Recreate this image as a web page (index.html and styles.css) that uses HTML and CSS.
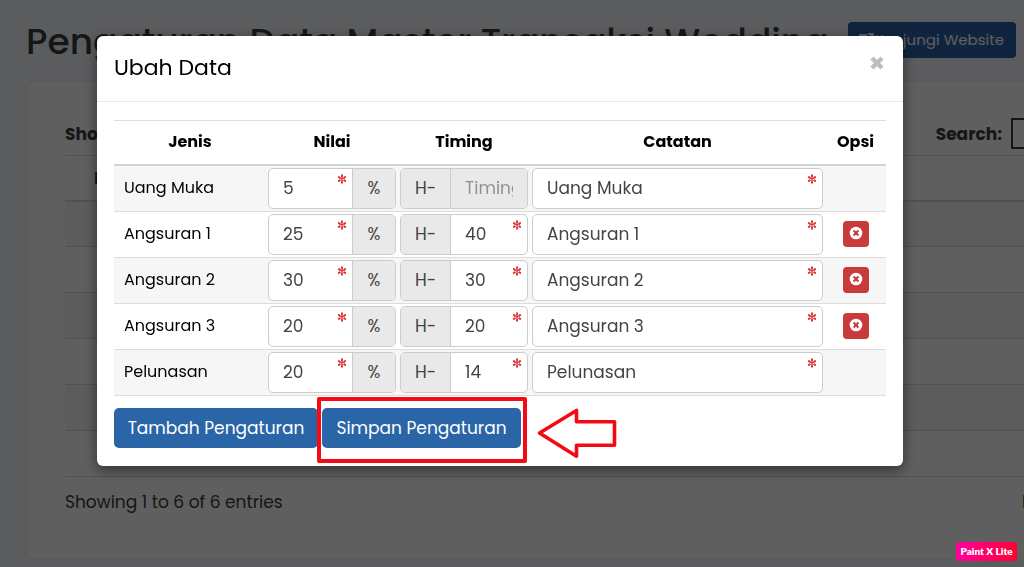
FILE: index.html
```html
<!DOCTYPE html>
<html lang="id">
<head>
<meta charset="utf-8">
<meta name="viewport" content="width=device-width, initial-scale=1">
<title>Pengaturan Data Master Transaksi Wedding</title>
<link rel="stylesheet" href="styles.css">
</head>
<body>
<svg class="defs" aria-hidden="true">
  <symbol id="star" viewBox="0 0 10 10"><g fill="none" stroke="#d9363a" stroke-linecap="round"><path stroke-width="1.1" d="M5 .9v8.2M1.4 2.9l7.2 4.2M1.4 7.1l7.2-4.2"/><path stroke-width="2" d="M5 1.5v.8M5 7.7v.8M2 3.2l.6.4M7.4 6.4l.6.4M2 6.8l.6-.4M7.4 3.6l.6-.4"/></g></symbol>
  <symbol id="remove" viewBox="0 0 14 14"><circle cx="7" cy="7" r="6.3" fill="#fff"/><path d="M4.6 4.6l4.8 4.8M9.4 4.6L4.6 9.4" stroke="#c93a3c" stroke-width="2.1"/></symbol>
</svg>

<main class="page">
  <header class="page-head">
    <h1>Pengaturan Data Master Transaksi Wedding</h1>
    <a class="visit" href="#"><svg viewBox="0 0 16 14" width="16" height="14" fill="none" stroke="currentColor" stroke-width="1.8"><path d="M9 2H2v11h10V8M10 1h5v5M15 1L7 9"/></svg>Kunjungi Website</a>
  </header>
  <section class="card">
    <div class="tools">
      <span class="strong">Show</span>
      <label class="search">Search: <input type="search"></label>
    </div>
    <table class="list">
      <thead><tr><th>No</th><th></th></tr></thead>
      <tbody>
        <tr><td></td><td></td></tr><tr><td></td><td></td></tr><tr><td></td><td></td></tr>
        <tr><td></td><td></td></tr><tr><td></td><td></td></tr><tr><td></td><td></td></tr>
      </tbody>
    </table>
    <div class="list-foot"><span>Showing 1 to 6 of 6 entries</span><a class="prev" href="#">Previous</a></div>
  </section>
</main>

<div class="backdrop">
  <div class="modal" role="dialog" aria-modal="true" aria-labelledby="modal-title">
    <div class="modal-head">
      <h2 id="modal-title">Ubah Data</h2>
      <button class="close" type="button" aria-label="Tutup"><svg viewBox="0 0 14 14" width="14" height="14"><path d="M2 2l10 10M12 2L2 12" stroke="#bdbdbd" stroke-width="4.4"/></svg></button>
    </div>
    <form class="modal-body">
      <table class="terms">
        <colgroup><col class="c-type"><col class="c-value"><col class="c-value"><col><col class="c-option"></colgroup>
        <thead><tr><th>Jenis</th><th>Nilai</th><th>Timing</th><th>Catatan</th><th>Opsi</th></tr></thead>
        <tbody>
          <tr>
            <td class="name">Uang Muka</td>
            <td><div class="group"><div class="field"><input aria-label="Nilai Uang Muka" value="5"><svg class="req"><use href="#star"/></svg></div><span class="addon">%</span></div></td>
            <td><div class="group"><span class="addon pre">H-</span><div class="field"><input aria-label="Timing Uang Muka" placeholder="Timing" disabled></div></div></td>
            <td><div class="group"><div class="field"><input aria-label="Catatan Uang Muka" value="Uang Muka"><svg class="req"><use href="#star"/></svg></div></div></td>
            <td></td>
          </tr>
          <tr>
            <td class="name">Angsuran 1</td>
            <td><div class="group"><div class="field"><input aria-label="Nilai Angsuran 1" value="25"><svg class="req"><use href="#star"/></svg></div><span class="addon">%</span></div></td>
            <td><div class="group"><span class="addon pre">H-</span><div class="field"><input aria-label="Timing Angsuran 1" value="40"><svg class="req"><use href="#star"/></svg></div></div></td>
            <td><div class="group"><div class="field"><input aria-label="Catatan Angsuran 1" value="Angsuran 1"><svg class="req"><use href="#star"/></svg></div></div></td>
            <td><button class="delete" type="button" aria-label="Hapus Angsuran 1"><svg><use href="#remove"/></svg></button></td>
          </tr>
          <tr>
            <td class="name">Angsuran 2</td>
            <td><div class="group"><div class="field"><input aria-label="Nilai Angsuran 2" value="30"><svg class="req"><use href="#star"/></svg></div><span class="addon">%</span></div></td>
            <td><div class="group"><span class="addon pre">H-</span><div class="field"><input aria-label="Timing Angsuran 2" value="30"><svg class="req"><use href="#star"/></svg></div></div></td>
            <td><div class="group"><div class="field"><input aria-label="Catatan Angsuran 2" value="Angsuran 2"><svg class="req"><use href="#star"/></svg></div></div></td>
            <td><button class="delete" type="button" aria-label="Hapus Angsuran 2"><svg><use href="#remove"/></svg></button></td>
          </tr>
          <tr>
            <td class="name">Angsuran 3</td>
            <td><div class="group"><div class="field"><input aria-label="Nilai Angsuran 3" value="20"><svg class="req"><use href="#star"/></svg></div><span class="addon">%</span></div></td>
            <td><div class="group"><span class="addon pre">H-</span><div class="field"><input aria-label="Timing Angsuran 3" value="20"><svg class="req"><use href="#star"/></svg></div></div></td>
            <td><div class="group"><div class="field"><input aria-label="Catatan Angsuran 3" value="Angsuran 3"><svg class="req"><use href="#star"/></svg></div></div></td>
            <td><button class="delete" type="button" aria-label="Hapus Angsuran 3"><svg><use href="#remove"/></svg></button></td>
          </tr>
          <tr>
            <td class="name">Pelunasan</td>
            <td><div class="group"><div class="field"><input aria-label="Nilai Pelunasan" value="20"><svg class="req"><use href="#star"/></svg></div><span class="addon">%</span></div></td>
            <td><div class="group"><span class="addon pre">H-</span><div class="field"><input aria-label="Timing Pelunasan" value="14"><svg class="req"><use href="#star"/></svg></div></div></td>
            <td><div class="group"><div class="field"><input aria-label="Catatan Pelunasan" value="Pelunasan"><svg class="req"><use href="#star"/></svg></div></div></td>
            <td></td>
          </tr>
        </tbody>
      </table>
      <div class="actions">
        <button class="primary add" type="button">Tambah Pengaturan</button>
        <div class="marked">
          <button class="primary save" type="submit">Simpan Pengaturan</button>
          <span class="mark-box"></span>
          <svg class="mark-arrow" viewBox="0 0 80 50" width="80" height="50"><path d="M2.5 25L39.5 2.5v11.3h38v23.4h-38v11z" fill="none" stroke="#f40a14" stroke-width="3.6" stroke-linejoin="round"/></svg>
        </div>
      </div>
    </form>
  </div>
</div>
<div class="badge">Paint X Lite</div>
</body>
</html>
```
FILE: styles.css
```css
* { box-sizing: border-box; }
body {
  margin: 0;
  min-height: 100vh;
  overflow: hidden;
  background: #f5f7fb;
  color: #3a3d40;
  font: 16px/24px Poppins, Inter, "Open Sans", sans-serif;
}
h1, h2 { margin: 0; font-weight: 500; }
button, input { font: inherit; }
table { width: 100%; border-collapse: collapse; }
.defs { display: none; }

.page { padding: 20px 0 0 26px; }
.page-head { display: flex; justify-content: space-between; align-items: flex-start; padding-right: 8px; }
h1 { font-size: 36px; line-height: 44px; white-space: nowrap; }
.visit {
  display: flex;
  align-items: center;
  gap: 1px;
  flex: none;
  height: 36px;
  margin-top: 2px;
  padding: 0 12px 0 10px;
  border-radius: 4px;
  background: #2a65a8;
  color: #fff;
  font-size: 15px;
  text-decoration: none;
}
.card {
  margin: 18px -200px 0 2px;
  padding: 36px 33px 45px 37px;
  border-radius: 8px;
  background: #fff;
  box-shadow: 0 0 6px rgba(0, 0, 0, .06);
  font-size: 17px;
}
.tools { display: flex; justify-content: space-between; align-items: center; font-weight: 700; }
.search { display: flex; align-items: center; gap: 9px; }
.search input { width: 180px; height: 31px; border: 2px solid #35383c; background: #fff; }
.list { margin-top: 6px; }
.list th { height: 45px; padding: 0 29px; border-top: 1px solid #d6d8da; border-bottom: 2px solid #d6d8da; text-align: left; }
.list td { height: 46px; border-bottom: 1px solid #d6d8da; }
.list tbody tr:nth-child(odd) { background: #f6f6f6; }
.list-foot { display: flex; justify-content: space-between; padding-top: 13px; }
.prev { width: 169px; color: inherit; text-decoration: none; }

.backdrop {
  position: fixed;
  inset: 0;
  padding: 36px 24px 36px 0;
  background: rgba(0, 0, 0, .627);
}
.modal {
  max-width: 806px;
  margin: 0 auto;
  border-radius: 6px;
  background: #fff;
  box-shadow: 0 4px 14px rgba(0, 0, 0, .5);
  color: #000;
}
.modal-head {
  display: flex;
  justify-content: space-between;
  align-items: flex-start;
  padding: 16px 17px 17px;
  border-bottom: 1px solid #e9e9e9;
}
h2 { font-size: 22px; line-height: 32px; font-weight: 400; }
.close { display: flex; padding: 4px 2px; border: 0; background: none; }
.modal-body { padding: 18px 17px; }
.terms { table-layout: fixed; }
.c-type { width: 152px; }
.c-value { width: 132px; }
.c-option { width: 61px; }
.terms th { height: 44px; padding: 0; border-top: 1px solid #ddd; border-bottom: 2px solid #d4d4d4; font-weight: 700; }
.terms td { padding: 2px; border-bottom: 1px solid #ddd; text-align: center; }
.terms .name { padding-left: 10px; text-align: left; }
.terms tbody tr:nth-child(odd) { background: #f6f6f6; }
.group {
  display: flex;
  height: 41px;
  overflow: hidden;
  border: 1px solid #ccc;
  border-radius: 5px;
  background: #fff;
  color: #444;
  font-size: 17px;
}
.field { position: relative; flex: 1; min-width: 0; }
.field input { width: 100%; height: 100%; padding: 0 14px; border: 0; background: none; color: inherit; }
.field input:disabled { background: #e9e9e9; }
.field input::placeholder { color: #929292; opacity: 1; }
.req { position: absolute; top: 5px; right: 5px; width: 10px; height: 10px; }
.addon { width: 43px; border-left: 1px solid #ccc; background: #e9e9e9; line-height: 39px; }
.pre { width: 50px; border-left: 0; border-right: 1px solid #ccc; }
.delete {
  width: 26px;
  height: 26px;
  padding: 5px 6px 7px;
  border: 0;
  border-radius: 4px;
  background: #c93a3c;
  vertical-align: middle;
}
.delete svg { display: block; width: 14px; height: 14px; }
.actions { display: flex; gap: 4px; padding-top: 12px; }
.primary {
  height: 40px;
  padding: 0;
  border: 0;
  border-radius: 5px;
  background: #2a65a8;
  color: #fff;
  font-size: 17px;
  white-space: nowrap;
}
.add { width: 204px; }
.save { width: 199px; }
.marked { position: relative; }
.mark-box { position: absolute; inset: -11px -6px -15px -5px; border: 4px solid #f40a14; border-radius: 2px; }
.mark-arrow { position: absolute; left: 215px; top: 0; }
.badge {
  position: fixed;
  right: 7px;
  bottom: 6px;
  width: 61px;
  border-radius: 4px;
  background: linear-gradient(90deg, #ff00a0, #ff0030);
  color: #fff;
  font: 800 10px/19px Lato, sans-serif;
  text-align: center;
}
```
